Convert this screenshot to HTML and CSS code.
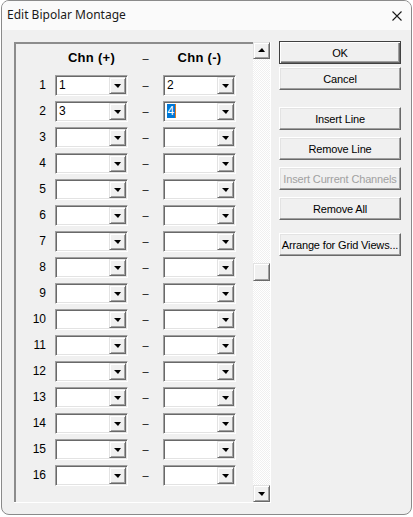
FILE: index.html
```html
<!DOCTYPE html>
<html>
<head>
<meta charset="utf-8">
<title>Edit Bipolar Montage</title>
<link rel="stylesheet" href="styles.css">
</head>
<body>
<div class="window">
  <div class="titlebar">
    <span class="title">Edit Bipolar Montage</span>
    <svg class="close" width="10" height="10" viewBox="0 0 10 10"><path d="M0.5 0.5 L9.5 9.5 M9.5 0.5 L0.5 9.5" stroke="#1a1a1a" stroke-width="1.1" fill="none"/></svg>
  </div>
  <div class="content">
    <div class="listwrap">
      <div class="list">
        <div class="header">
          <span class="hnum"></span>
          <span class="hcol">Chn (+)</span>
          <span class="dash">–</span>
          <span class="hcol">Chn (-)</span>
        </div>
        <div class="row"><span class="num">1</span><div class="combo"><span class="val">1</span><span class="ddb"><i class="tri"></i></span></div><span class="dash">–</span><div class="combo"><span class="val">2</span><span class="ddb"><i class="tri"></i></span></div></div>
        <div class="row"><span class="num">2</span><div class="combo"><span class="val">3</span><span class="ddb"><i class="tri"></i></span></div><span class="dash">–</span><div class="combo"><span class="val"><span class="sel">4</span></span><span class="ddb"><i class="tri"></i></span></div></div>
        <div class="row"><span class="num">3</span><div class="combo"><span class="val"></span><span class="ddb"><i class="tri"></i></span></div><span class="dash">–</span><div class="combo"><span class="val"></span><span class="ddb"><i class="tri"></i></span></div></div>
        <div class="row"><span class="num">4</span><div class="combo"><span class="val"></span><span class="ddb"><i class="tri"></i></span></div><span class="dash">–</span><div class="combo"><span class="val"></span><span class="ddb"><i class="tri"></i></span></div></div>
        <div class="row"><span class="num">5</span><div class="combo"><span class="val"></span><span class="ddb"><i class="tri"></i></span></div><span class="dash">–</span><div class="combo"><span class="val"></span><span class="ddb"><i class="tri"></i></span></div></div>
        <div class="row"><span class="num">6</span><div class="combo"><span class="val"></span><span class="ddb"><i class="tri"></i></span></div><span class="dash">–</span><div class="combo"><span class="val"></span><span class="ddb"><i class="tri"></i></span></div></div>
        <div class="row"><span class="num">7</span><div class="combo"><span class="val"></span><span class="ddb"><i class="tri"></i></span></div><span class="dash">–</span><div class="combo"><span class="val"></span><span class="ddb"><i class="tri"></i></span></div></div>
        <div class="row"><span class="num">8</span><div class="combo"><span class="val"></span><span class="ddb"><i class="tri"></i></span></div><span class="dash">–</span><div class="combo"><span class="val"></span><span class="ddb"><i class="tri"></i></span></div></div>
        <div class="row"><span class="num">9</span><div class="combo"><span class="val"></span><span class="ddb"><i class="tri"></i></span></div><span class="dash">–</span><div class="combo"><span class="val"></span><span class="ddb"><i class="tri"></i></span></div></div>
        <div class="row"><span class="num">10</span><div class="combo"><span class="val"></span><span class="ddb"><i class="tri"></i></span></div><span class="dash">–</span><div class="combo"><span class="val"></span><span class="ddb"><i class="tri"></i></span></div></div>
        <div class="row"><span class="num">11</span><div class="combo"><span class="val"></span><span class="ddb"><i class="tri"></i></span></div><span class="dash">–</span><div class="combo"><span class="val"></span><span class="ddb"><i class="tri"></i></span></div></div>
        <div class="row"><span class="num">12</span><div class="combo"><span class="val"></span><span class="ddb"><i class="tri"></i></span></div><span class="dash">–</span><div class="combo"><span class="val"></span><span class="ddb"><i class="tri"></i></span></div></div>
        <div class="row"><span class="num">13</span><div class="combo"><span class="val"></span><span class="ddb"><i class="tri"></i></span></div><span class="dash">–</span><div class="combo"><span class="val"></span><span class="ddb"><i class="tri"></i></span></div></div>
        <div class="row"><span class="num">14</span><div class="combo"><span class="val"></span><span class="ddb"><i class="tri"></i></span></div><span class="dash">–</span><div class="combo"><span class="val"></span><span class="ddb"><i class="tri"></i></span></div></div>
        <div class="row"><span class="num">15</span><div class="combo"><span class="val"></span><span class="ddb"><i class="tri"></i></span></div><span class="dash">–</span><div class="combo"><span class="val"></span><span class="ddb"><i class="tri"></i></span></div></div>
        <div class="row"><span class="num">16</span><div class="combo"><span class="val"></span><span class="ddb"><i class="tri"></i></span></div><span class="dash">–</span><div class="combo"><span class="val"></span><span class="ddb"><i class="tri"></i></span></div></div>
      </div>
      <div class="scroll">
        <span class="sbtn"><i class="tri up"></i></span>
        <div class="track"><span class="thumb"></span></div>
        <span class="sbtn"><i class="tri"></i></span>
      </div>
    </div>
    <div class="buttons">
      <button class="btn default">OK</button>
      <button class="btn cancel">Cancel</button>
      <button class="btn insert">Insert Line</button>
      <button class="btn next">Remove Line</button>
      <button class="btn next disabled">Insert Current Channels</button>
      <button class="btn next">Remove All</button>
      <button class="btn arrange">Arrange for Grid Views...</button>
    </div>
  </div>
</div>
</body>
</html>
```
FILE: styles.css
```css
html, body {
  margin: 0;
  padding: 0;
  background: #ffffff;
}
body {
  font-family: "Liberation Sans", Arial, sans-serif;
  font-size: 11px;
  color: #000;
}
.window {
  box-sizing: border-box;
  width: 411px;
  height: 515px;
  margin-left: 1px;
  border: 1px solid #8a8a8a;
  border-radius: 8px;
  background: #f0f0f0;
  overflow: hidden;
}
.titlebar {
  height: 29px;
  background: #fafafa;
  display: flex;
  align-items: center;
  justify-content: space-between;
  padding: 0 9px 0 5px;
}
.title {
  font-family: "Noto Sans", "Open Sans", sans-serif;
  font-size: 12px;
  color: #1a1a1a;
  padding-bottom: 2px;
}
.close {
  display: block;
}
.content {
  display: flex;
  align-items: flex-start;
  padding: 12px 0 0 12px;
}
.listwrap {
  display: flex;
  border-right: 1px solid #fff;
  border-bottom: 1px solid #fff;
}
.list {
  box-sizing: border-box;
  width: 239px;
  height: 460px;
  border-top: 2px solid #8c8c8c;
  border-left: 2px solid #8c8c8c;
}
.header {
  display: flex;
  align-items: center;
  height: 31px;
  box-sizing: border-box;
  padding-bottom: 5px;
  font-size: 13px;
  font-weight: bold;
}
.hnum {
  width: 39px;
}
.hcol {
  width: 73px;
  text-align: center;
  letter-spacing: 0.3px;
}
.header .dash {
  font-weight: normal;
  font-size: 11px;
  padding-top: 0;
  margin-top: 1px;
}
.row {
  display: flex;
  align-items: center;
  height: 21px;
  margin-bottom: 5px;
}
.num {
  width: 30px;
  margin-right: 9px;
  text-align: right;
  padding-bottom: 2px;
  font-size: 12px;
}
.dash {
  width: 35px;
  text-align: center;
  margin-top: -2px;
}
.combo {
  box-sizing: border-box;
  width: 73px;
  height: 21px;
  border: 1px solid;
  border-color: #a0a0a0 #ffffff #ffffff #a0a0a0;
  box-shadow: inset 1px 1px 0 #696969, inset -1px -1px 0 #e3e3e3;
  background: #fff;
  display: flex;
  padding: 1px;
}
.val {
  flex: 1;
  padding-left: 2px;
  line-height: 17px;
  font-size: 12px;
}
.sel {
  background: #0078d7;
  color: #fff;
  padding: 0 0.5px;
  border-right: 1px solid #e07a20;
}
.ddb, .sbtn {
  box-sizing: border-box;
  width: 17px;
  height: 17px;
  background: #f0f0f0;
  border: 1px solid;
  border-color: #e3e3e3 #696969 #696969 #e3e3e3;
  box-shadow: inset 1px 1px 0 #fff, inset -1px -1px 0 #a0a0a0;
  display: flex;
  align-items: center;
  justify-content: center;
}
.tri {
  display: block;
  width: 0;
  height: 0;
  border-left: 4px solid transparent;
  border-right: 3px solid transparent;
  border-top: 4px solid #000;
  margin-top: 1px;
}
.tri.up {
  border-top: 0;
  border-bottom: 4px solid #000;
  margin-top: -1px;
}
.scroll {
  width: 17px;
  height: 460px;
  display: flex;
  flex-direction: column;
}
.track {
  flex: 1;
  background-color: #f0f0f0;
  background-image: conic-gradient(#ffffff 25%, #f0f0f0 0 50%, #ffffff 0 75%, #f0f0f0 0);
  background-size: 2px 2px;
}
.thumb {
  display: block;
  box-sizing: border-box;
  width: 17px;
  height: 18px;
  margin-top: 204px;
  background: #f0f0f0;
  border: 1px solid;
  border-color: #e3e3e3 #696969 #696969 #e3e3e3;
  box-shadow: inset 1px 1px 0 #fff, inset -1px -1px 0 #a0a0a0;
}
.buttons {
  display: flex;
  flex-direction: column;
  margin-left: 8px;
}
.btn {
  box-sizing: border-box;
  width: 122px;
  height: 23px;
  padding: 0;
  white-space: nowrap;
  overflow: hidden;
  font-family: "Liberation Sans", Arial, sans-serif;
  font-size: 11px;
  letter-spacing: -0.15px;
  color: #000;
  background: #f0f0f0;
  border: 1px solid;
  border-color: #fff #696969 #696969 #fff;
  box-shadow: inset -1px -1px 0 #a0a0a0, inset 1px 1px 0 #e3e3e3;
}
.btn.default {
  margin-top: -1px;
  border: 1px solid #404040;
  box-shadow: inset 1px 1px 0 #fff, inset -1px -1px 0 #696969, inset -2px -2px 0 #a0a0a0;
}
.btn.cancel {
  margin-top: 3px;
}
.btn.insert {
  margin-top: 17px;
}
.btn.next {
  margin-top: 7px;
}
.btn.disabled {
  color: #a0a0a0;
}
.btn.arrange {
  margin-top: 13px;
}
```
